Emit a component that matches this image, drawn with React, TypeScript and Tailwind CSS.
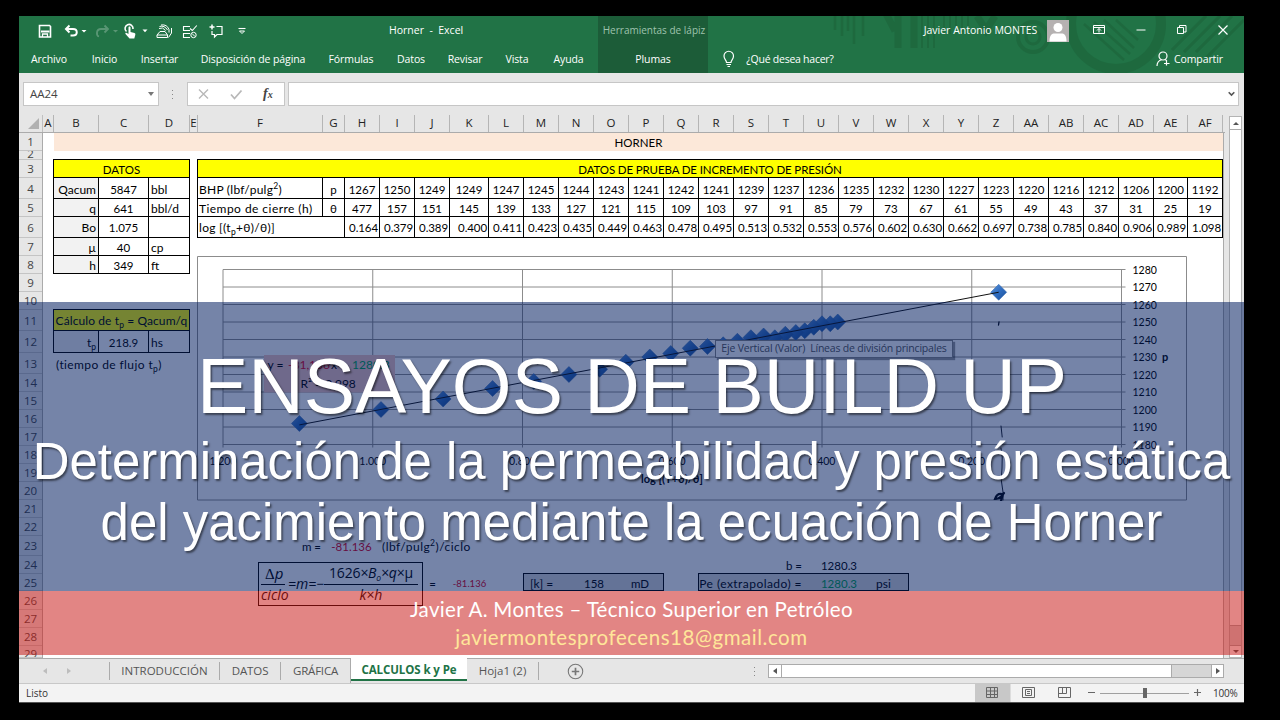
import React from "react";
import clsx from "clsx";

const COLS: [string, number][] = [
  ["A", 11], ["B", 45], ["C", 50], ["D", 41], ["E", 8], ["F", 125], ["G", 22], ["H", 35],
  ["I", 35], ["J", 35], ["K", 39], ["L", 35], ["M", 35], ["N", 35], ["O", 35], ["P", 35],
  ["Q", 35], ["R", 35], ["S", 35], ["T", 35], ["U", 35], ["V", 35], ["W", 35], ["X", 35],
  ["Y", 35], ["Z", 35], ["AA", 35], ["AB", 35], ["AC", 35], ["AD", 35], ["AE", 34], ["AF", 35],
];

const ROWS = [
  18, 9, 18, 21, 18, 21, 18, 18, 18, 18, 21, 22, 21, 18, 18, 18, 18, 18, 18, 18, 18, 18, 20, 18, 17,
  19, 18, 18, 12,
];

const P = [
  1267, 1250, 1249, 1249, 1247, 1245, 1244, 1243, 1241, 1242, 1241, 1239, 1237, 1236, 1235, 1232,
  1230, 1227, 1223, 1220, 1216, 1212, 1206, 1200, 1192,
];
const THETA = [
  477, 157, 151, 145, 139, 133, 127, 121, 115, 109, 103, 97, 91, 85, 79, 73, 67, 61, 55, 49, 43, 37,
  31, 25, 19,
];
const LOG = [
  0.164, 0.379, 0.389, 0.4, 0.411, 0.423, 0.435, 0.449, 0.463, 0.478, 0.495, 0.513, 0.532, 0.553,
  0.576, 0.602, 0.63, 0.662, 0.697, 0.738, 0.785, 0.84, 0.906, 0.989, 1.098,
];

const colIndex = (name: string) => COLS.findIndex((c) => c[0] === name) + 1;

type CellProps = {
  from: string;
  to?: string;
  row: number;
  box?: boolean;
  className?: string;
  children?: React.ReactNode;
};

const Cell = ({ from, to, row, box, className, children }: CellProps) => (
  <div
    className={clsx(
      "flex items-center whitespace-nowrap leading-none",
      box && "-ml-px -mt-px border border-black",
      row === 4 && "pt-0.5",
      className
    )}
    style={{
      gridColumn: `${colIndex(from)} / ${colIndex(to ?? from) + 1}`,
      gridRow: row,
    }}
  >
    <span className="relative top-px">{children}</span>
  </div>
);

const Sub = ({ children }: { children: React.ReactNode }) => (
  <span className="relative top-[3px] text-[8.5px]">{children}</span>
);

const Sup = ({ children }: { children: React.ReactNode }) => (
  <span className="relative -top-[5px] text-[8.5px]">{children}</span>
);

const TitleBar = () => (
  <div className="flex h-[29px] items-center text-[10.5px] font-medium">
    <svg className="shrink-0" width="240" height="29" viewBox="19 16 240 29" fill="none" stroke="#fff" strokeWidth="1.3">
      {/* save */}
      <path d="M39.5 25.5h10l1 1v10.5h-11z" strokeWidth="1.6" />
      <path d="M41 31.5h8.5" strokeWidth="2" />
      <path d="M42.5 37v-3h5v3" />
      {/* undo / redo */}
      <path d="M69.500 25.500L66 29l3.500 3.500M66.500 29h6.500c5 0 5 6.500 0 6.500h-2.500" strokeWidth="2" />
      <path d="M81.500 30h5l-2.500 2.500z" fill="#fff" stroke="none" />
      <g opacity="0.25">
        <path d="M104.500 25.500L108 29l-3.500 3.500M107.500 29h-6.500c-5 0-5 6.500-2 7.500" strokeWidth="1.800" />
        <path d="M113 30h5l-2.500 2.500z" fill="#fff" stroke="none" />
      </g>
      {/* touch mode */}
      <path d="M126.500 31.500a4 4 0 1 1 6.500-2.500" strokeWidth="1.600" />
      <path
        d="M128.500 27.500c0-1.300 2-1.300 2 0v4.500l4 1c1 .5 1 1 .7 2.200l-.9 3.300h-4.800l-4-4.500c-.5-1 .5-1.600 1.300-1l1.700 1z"
        fill="#fff"
        stroke="none"
      />
      <path d="M142.500 29.500h5l-2.500 2.800z" fill="#fff" stroke="none" />
      {/* quick print */}
      <path d="M160 31.500l-3 3.500v2.500h10.500v-2.500l-2.500-3.500zM157 35h10.500" strokeWidth="1" />
      <path d="M159 28.500q4-2 6.500 2M159.500 26.500q5-1.500 8 3.500M161 25q6-1 8 4.500v3" strokeWidth="1" />
      <path d="M168.500 37.500l3-4.500v-5" strokeWidth="1" />
      {/* form check */}
      <path d="M190 26.500h-6.500v4h6.500M190 33.500h-6.500v4h6.500M190 28.500l2.300 2 4.500-5" strokeWidth="1.100" />
      <circle cx="193.500" cy="35" r="2.700" strokeWidth="1" />
      <path d="M192 33.500l3 3" strokeWidth="1" />
      {/* new comment */}
      <path d="M216.500 26.500h5.500v8h-5l-2.500 2.500v-2.500h-2.500v-3.500" strokeWidth="1.200" />
      <path d="M212 24.500v5M209.500 27h5" strokeWidth="1.500" />
      <path d="M238.500 28.500h7" strokeWidth="1.100" />
      <path d="M239.500 31h5l-2.500 2.500z" strokeWidth="1" />
    </svg>
    <span className="ml-[130px] w-[74px] whitespace-pre text-center">Horner  -  Excel</span>
    <span className="ml-[135px] flex h-full w-[110px] shrink-0 items-center justify-center self-stretch whitespace-nowrap bg-[#1c5c38] pl-0.5 text-[10px] font-normal text-[#9fc3ae]">
      Herramientas de lápiz
    </span>
    <span className="ml-[213px] w-[119px] whitespace-nowrap text-center">Javier Antonio MONTES</span>
    <svg className="ml-[7px] shrink-0" width="22" height="22" viewBox="0 0 22 22">
      <path d="M0 0h22v22H0z" fill="#b5b1b1" />
      <circle cx="11" cy="7.500" r="4.500" fill="#fff" />
      <path d="M2.500 21.500c0-6.500 2.500-8 5-8h7c2.500 0 5 1.500 5 8z" fill="#fff" />
    </svg>
    <svg className="-mt-px ml-[23px] shrink-0" width="140" height="20" viewBox="1092 20 140 20" fill="none" stroke="#fff">
      <path d="M1093.500 25.500h11v8h-11zM1093.500 27.500h11M1099 32.500v-4M1097 30.500l2-2 2 2" />
      <path d="M1136.500 30h9" />
      <path d="M1177.500 27.500h6v6h-6zM1179.500 27v-1.500h6.500v6.500h-2" />
      <path d="M1218.500 25.500l9 9M1227.500 25.500l-9 9" strokeWidth="1.200" />
    </svg>
  </div>
);

const RIBBON: [string, string][] = [
  ["Archivo", "w-[60px]"],
  ["Inicio", "w-[51px]"],
  ["Insertar", "w-[59px]"],
  ["Disposición de página", "w-[128px]"],
  ["Fórmulas", "w-[68px]"],
  ["Datos", "w-[52px]"],
  ["Revisar", "w-[56px]"],
  ["Vista", "w-[48px]"],
  ["Ayuda", "w-[55px]"],
];

const Ribbon = () => (
  <div className="flex h-7 items-center text-[10.5px] font-medium tracking-[-0.1px]">
    {RIBBON.map(([label, width]) => (
      <span key={label} className={clsx("whitespace-nowrap pt-0.5 text-center", width)}>
        {label}
      </span>
    ))}
    <span className="ml-0.5 flex h-full w-[110px] items-center justify-center bg-[#1c5c38] pt-0.5">
      Plumas
    </span>
    <svg className="ml-3.5" width="14" height="18" viewBox="0 0 14 18" fill="none" stroke="#fff">
      <path d="M4.500 12.500c0-2.500-2.500-3-2.500-6.500a4.700 4.700 0 0 1 9.500 0c0 3.500-2.500 4-2.500 6.500z" strokeWidth="1.200" />
      <path d="M4.500 14.500h4.500M5.500 16.500h2.500" />
    </svg>
    <span className="ml-2 w-[92px] whitespace-nowrap pt-0.5 text-center tracking-[-0.25px]">
      ¿Qué desea hacer?
    </span>
    <svg className="ml-[320px]" width="15" height="16" viewBox="0 0 15 16" fill="none" stroke="#fff" strokeWidth="1.200">
      <circle cx="7" cy="5" r="4" />
      <path d="M1 15c0-4 2-5.500 4.500-6.300M9 8.500l1.500 1M10.500 9v5.500M8 12.500h5.500" />
    </svg>
    <span className="ml-0.5 w-[51px] whitespace-nowrap pt-0.5 text-center">Compartir</span>
  </div>
);

// faint ornament printed on the green header
const HeaderArt = () => (
  <svg
    className="absolute right-0 top-0"
    width="420"
    height="57"
    viewBox="824 16 420 57"
    fill="none"
    stroke="#1c6139"
    opacity="0.55"
  >
    <path d="M835 16v14M842 16v20M848 16v15M854 16v28M863 16v20" strokeWidth="2.500" />
    <path d="M879 16l16 31M898 16v48M914 16v48" strokeWidth="7" transform="translate(0 -16)" />
    <path d="M916 16v48M922 16v48M928 16v48M934 16v48" strokeWidth="2" transform="translate(0 -16)" />
    <path d="M944 16v14M950 16v18M956 16v12M962 16v16M968 16v10" strokeWidth="2" />
    <path d="M977 16l9 14 9-14" strokeWidth="7" />
    <circle cx="1033" cy="51" r="15" strokeWidth="4" transform="translate(0 -14)" />
    <circle cx="1033" cy="37" r="7" strokeWidth="3" />
    <circle cx="1116" cy="32" r="45" strokeWidth="10" transform="translate(0 -8)" />
    <path d="M1084 24l40 36M1094 22l36 32M1104 20l30 28M1116 20l22 20" strokeWidth="2.500" />
    <path d="M1184 52l36-36M1196 52l36-36M1206 58l38-38M1172 50l34-34" strokeWidth="3" />
  </svg>
);

const FormulaBar = () => (
  <div className="flex h-[42px] items-center bg-[#e6e6e6] pl-1 pr-[5px] text-[#444]">
    <div className="flex h-6 w-[136px] items-center justify-between border border-[#c6c6c6] bg-white px-1.5 text-[11.5px]">
      AA24
      <span className="-mr-0.5 h-0 w-0 border-x-[3.5px] border-t-4 border-x-transparent border-t-[#777]" />
    </div>
    <div className="ml-[13px] flex flex-col gap-[3px]">
      <i className="size-px bg-[#888]" />
      <i className="size-px bg-[#888]" />
      <i className="size-px bg-[#888]" />
    </div>
    <div className="ml-3.5 flex h-6 w-[98px] items-center border border-[#c6c6c6] bg-white">
      <svg className="ml-2.5" width="45" height="12" viewBox="0 0 45 12" fill="none" stroke="#b8b8b8">
        <path d="M1 1.500l9 9M10 1.500l-9 9" strokeWidth="1.400" />
        <path d="M33 6.500l3.500 4 7-8" strokeWidth="1.800" />
      </svg>
      <span className="ml-5 font-['Liberation_Serif',serif] text-[14px] font-bold italic leading-none">
        f<span className="text-[10px]">x</span>
      </span>
    </div>
    <div className="ml-[3px] flex h-6 flex-1 items-center justify-end border border-[#c6c6c6] bg-white pr-[3px]">
      <svg width="7" height="6" viewBox="0 0 7 6" fill="none" stroke="#555" strokeWidth="1.600">
        <path d="M.7 1.200l2.800 2.800 2.800-2.800" />
      </svg>
    </div>
  </div>
);

const ColumnHeaders = () => (
  <div className="flex h-[18px] w-[1206px] border-b border-[#ababab] bg-[#e6e6e6] text-[11.5px] text-[#222]">
    <div className="flex w-6 shrink-0 items-end justify-end border-r border-[#c0c0c0] pb-[3px] pr-[3px]">
      <svg width="11" height="11">
        <path d="M11 0v11H0z" fill="#b1b1b1" />
      </svg>
    </div>
    {COLS.map(([name, width]) => (
      <div
        key={name}
        className="flex shrink-0 items-center justify-center border-r border-[#b5b5b5] pb-px leading-none"
        style={{ width }}
      >
        {name}
      </div>
    ))}
  </div>
);

const RowHeaders = () => (
  <div className="w-6 shrink-0 border-r border-[#ababab] bg-[#e6e6e6] text-[11.5px] text-[#444]">
    {ROWS.map((height, i) => (
      <div
        key={i}
        className={clsx(
          "flex justify-center overflow-hidden border-b border-[#c4c4c4] leading-none",
          i === 1 ? "items-end" : i === 28 ? "items-start pt-0.5" : "items-center pt-px"
        )}
        style={{ height }}
      >
        {i + 1}
      </div>
    ))}
  </div>
);

const chartX = (v: number) => 1121.5 - v * 748.75;
const chartY = (p: number) => 269.5 + (1280 - p) * 1.75;

const Y_TICKS = [1280, 1270, 1260, 1250, 1240, 1230, 1220, 1210, 1200, 1190, 1180];
const X_TICKS = [1.2, 1.0, 0.8, 0.6, 0.4, 0.2, 0];

const Chart = () => (
  <div className="absolute left-[154px] top-[123px]">
    <svg width="990" height="245" viewBox="197 256 990 245" className="block" fontSize="10.5">
      <defs>
        <linearGradient id="marker" x1="0" y1="0" x2="1" y2="1">
          <stop offset="0" stopColor="#5b92d8" />
          <stop offset="0.5" stopColor="#2f6dc0" />
          <stop offset="1" stopColor="#1f519a" />
        </linearGradient>
      </defs>
      <path d="M197.500 256.500h989v243.500h-989z" fill="#fff" stroke="#8c8c8c" />
      <g stroke="#8c8c8c">
        {Y_TICKS.map((t) => (
          <path key={t} d={`M223 ${chartY(t)}H1125.500`} />
        ))}
        {X_TICKS.map((t) => (
          <path key={t} d={`M${chartX(t)} 269.500V447.500`} />
        ))}
      </g>
      {Y_TICKS.map((t) => (
        <text key={t} x="1132.500" y={chartY(t) + 4}>
          {t}
        </text>
      ))}
      {X_TICKS.map((t) => (
        <text key={t} x={chartX(t)} y="464.500" textAnchor="middle">
          {t.toFixed(3)}
        </text>
      ))}
      <text x="1162" y="361" fontSize="11" fontWeight="bold">p</text>
      <text x="672" y="482.500" fontSize="11" textAnchor="middle" fontWeight="bold">log [(T+θ)/θ]</text>
      <path d="M264 355h131v37.500H264z" fill="#f2c4c0" />
      <text y="369" fontSize="12">
        <tspan x="267.500">y =</tspan>
        <tspan x="288" fill="#e00020">-81,136</tspan>
        <tspan x="331">x</tspan>
        <tspan x="341">+</tspan>
        <tspan x="352" fill="#00a050">1280.3</tspan>
      </text>
      <text x="300.500" y="387.500" fontSize="12">R² = 0.998</text>
      {P.map((p, i) => (
        <path
          key={i}
          d="M0 -8L8 0L0 8L-8 0z"
          fill="url(#marker)"
          stroke="#2b62ad"
          strokeWidth="0.500"
          transform={`translate(${chartX(LOG[i])} ${chartY(p)})`}
        />
      ))}
      <path d={`M${chartX(1.098)} ${chartY(1191.2)}L${chartX(0.164)} ${chartY(1267)}`} stroke="#111" />
      {/* pen strokes */}
      <g stroke="#05070f" fill="none" strokeLinecap="round">
        <path d="M999 322l-.5 3" strokeWidth="1.300" />
        <path d="M1001 426l1.200 11M1001 448q2 8 1 20q-2 12 1 24v8" strokeWidth="0.900" />
        <path d="M1002 494q-5-1-7 5q5 0 8-5l-2 7M995 499l5-1 4-5" strokeWidth="2.200" />
      </g>
    </svg>
    <div className="absolute left-[518px] top-[84px] flex h-[18px] w-[238px] items-center justify-center whitespace-pre border border-[#888] bg-white font-['Open_Sans',sans-serif] text-[10.5px] tracking-[-0.2px] text-[#555] shadow-[2px_2px_1px_rgba(0,0,0,0.4)]">
      Eje Vertical (Valor)  Líneas de división principales
    </div>
  </div>
);

const Equation = () => (
  <div className="absolute left-[215px] top-[429px] flex h-[44px] w-[165px] items-center border border-black pl-0.5 font-['Open_Sans',sans-serif] text-[14px] italic leading-none">
    <div className="flex w-[29px] flex-col">
      <span className="h-5 pl-1 pt-0.5 text-[15px] leading-none">
        <span className="font-['Liberation_Serif',serif] not-italic">Δ</span>p
      </span>
      <span className="w-6 border-t border-black" />
      <span className="h-5 pt-[3px] text-[14px] leading-none">ciclo</span>
    </div>
    <span className="-ml-0.5 whitespace-nowrap">=m=−</span>
    <div className="mr-1 flex flex-1 flex-col items-center">
      <span className="h-5 whitespace-nowrap pt-0.5 text-[14px] leading-none tracking-[-0.2px]">
        <span className="not-italic">1626</span>×B<Sub>o</Sub>×q×<span className="not-italic">μ</span>
      </span>
      <span className="w-full border-t border-black" />
      <span className="h-5 pt-[3px] text-[14px] leading-none">k×h</span>
    </div>
  </div>
);

const DATOS: [number, string, string, string][] = [
  [4, "Qacum", "5847", "bbl"],
  [5, "q", "641", "bbl/d"],
  [6, "Bo", "1.075", ""],
  [7, "µ", "40", "cp"],
  [8, "h", "349", "ft"],
];

const Sheet = () => (
  <div
    className="relative grid w-[1181px] overflow-hidden border-r border-[#ababab] bg-white font-['Lato',sans-serif] text-[11.5px] text-black"
    style={{
      gridTemplateColumns: COLS.map((c) => c[1] + "px").join(" "),
      gridTemplateRows: ROWS.map((r) => r + "px").join(" "),
    }}
  >
    <Cell from="B" to="AF" row={1} className="justify-center bg-[#fce8d9] pb-px">HORNER</Cell>

    <Cell from="B" to="D" row={3} box className="justify-center bg-[#ffff00]">DATOS</Cell>
    {DATOS.map(([row, name, value, unit]) => (
      <React.Fragment key={row}>
        <Cell from="B" row={row} box className="justify-end bg-[#f2f2f2] pr-0.5 text-[12px]">{name}</Cell>
        <Cell from="C" row={row} box className="justify-center">{value}</Cell>
        <Cell from="D" row={row} box className="pl-0.5 text-[12px]">{unit}</Cell>
      </React.Fragment>
    ))}

    <Cell from="F" to="AF" row={3} box className="justify-center bg-[#ffff00] tracking-[-0.13px]">
      DATOS DE PRUEBA DE INCREMENTO DE PRESIÓN
    </Cell>
    <Cell from="F" row={4} box className="pl-px text-[12px] tracking-[0.25px]">BHP (lbf/pulg<Sup>2</Sup>)</Cell>
    <Cell from="G" row={4} box className="justify-center">p</Cell>
    <Cell from="F" row={5} box className="pl-px text-[12px] tracking-[0.45px]">Tiempo de cierre (h)</Cell>
    <Cell from="G" row={5} box className="justify-center">θ</Cell>
    <Cell from="F" to="G" row={6} box className="pl-px text-[12px] tracking-[0.3px]">log [(t<Sub>p</Sub>+θ)/θ)]</Cell>
    {COLS.slice(7).map(([name], i) => (
      <React.Fragment key={name}>
        <Cell from={name} row={4} box className="justify-center">{P[i]}</Cell>
        <Cell from={name} row={5} box className="justify-center">{THETA[i]}</Cell>
        <Cell from={name} row={6} box className="justify-end pr-px tracking-[-0.1px]">{LOG[i].toFixed(3)}</Cell>
      </React.Fragment>
    ))}

    <Cell from="B" to="D" row={11} box className="justify-center bg-[#ffff00] text-[12px] tracking-[0.1px]">
      Cálculo de t<Sub>p</Sub> = Qacum/q
    </Cell>
    <Cell from="B" row={12} box className="justify-end bg-[#f2f2f2] pr-0.5 text-[12px]">t<Sub>p</Sub></Cell>
    <Cell from="C" row={12} box className="justify-center">218.9</Cell>
    <Cell from="D" row={12} box className="pl-0.5 text-[12px]">hs</Cell>
    <Cell from="B" to="D" row={13} className="pl-0.5 text-[12px] tracking-[0.4px]">(tiempo de flujo t<Sub>p</Sub>)</Cell>

    <Cell from="F" row={23} className="justify-end pr-0.5">m =</Cell>
    <Cell from="G" to="H" row={23} className="justify-center text-[#e00020]">-81.136</Cell>
    <Cell from="I" to="L" row={23} className="pl-0.5 text-[12px] tracking-[0.45px]">(lbf/pulg<Sup>2</Sup>)/ciclo</Cell>
    <Cell from="R" to="T" row={24} className="justify-end pr-0.5">b =</Cell>
    <Cell from="U" to="V" row={24} className="justify-center">1280.3</Cell>
    <Cell from="J" row={25} className="justify-center">=</Cell>
    <Cell from="K" row={25} className="justify-center text-[9.5px] text-[#e00020]">-81.136</Cell>

    <Cell from="M" to="P" row={25} box className="bg-[#d9d9d9]" />
    <Cell from="M" row={25} className="justify-center text-[12px]">[k] =</Cell>
    <Cell from="N" to="O" row={25} className="justify-center">158</Cell>
    <Cell from="P" row={25} className="pl-0.5">mD</Cell>
    <Cell from="R" to="W" row={25} box className="bg-[#d9d9d9]" />
    <Cell from="R" to="T" row={25} className="justify-end pr-0.5 text-[12px] tracking-[0.45px]">Pe (extrapolado) =</Cell>
    <Cell from="U" to="V" row={25} className="justify-center text-[#00a050]">1280.3</Cell>
    <Cell from="W" row={25} className="pl-0.5 text-[12px]">psi</Cell>

    <Chart />
    <Equation />
  </div>
);

const ScrollBar = () => (
  <div className="ml-1 mt-px flex w-[13px] flex-col border border-[#b4b4b4] bg-[#d6d6d6]">
    <div className="flex h-[13px] items-center justify-center border-b border-[#ababab] bg-white">
      <span className="h-0 w-0 border-x-[3px] border-b-[3px] border-x-transparent border-b-[#555]" />
    </div>
    <div className="h-[496px] border-b border-[#ababab] bg-white" />
    <div className="mt-auto flex h-[12px] items-center justify-center border-t border-[#ababab] bg-white">
      <span className="h-0 w-0 border-x-[3px] border-t-[3px] border-x-transparent border-t-[#555]" />
    </div>
  </div>
);

const SheetTabs = () => (
  <div className="flex h-[25px] bg-[#e6e6e6] text-[11.5px] text-[#555]">
    <div className="flex flex-1 border-t border-[#ababab]">
      <div className="flex w-[91px] items-center gap-5 pl-6">
        <i className="border-y-[3px] border-r-[4px] border-y-transparent border-r-[#bdbdbd]" />
        <i className="border-y-[3px] border-l-[4px] border-y-transparent border-l-[#bdbdbd]" />
      </div>
      <div className="my-[3px] -ml-px flex w-[111px] items-center justify-center border-x border-[#ababab]">INTRODUCCIÓN</div>
      <div className="my-[3px] flex w-[61px] items-center justify-center border-r border-[#ababab] tracking-[-0.1px]">DATOS</div>
      <div className="flex w-[70px] items-center justify-center border-r border-[#ababab] tracking-[-0.2px]">GRÁFICA</div>
      <div className="-mt-px flex h-[23px] w-[116px] items-center justify-center border-b-2 border-[#217346] bg-white pt-0.5 font-bold tracking-[-0.1px] text-[#217346]">
        CALCULOS k y Pe
      </div>
      <div className="my-[3px] flex w-[72px] items-center justify-center border-r border-[#ababab]">Hoja1 (2)</div>
      <svg className="ml-7 mt-1" width="17" height="17" viewBox="0 0 16 16" fill="none" stroke="#777">
        <circle cx="8" cy="8" r="6.800" />
        <path d="M8 4.500v7M4.500 8h7" strokeWidth="1.600" />
      </svg>
      <div className="ml-[170px] flex flex-col justify-center gap-[3px]">
        <i className="size-px bg-[#888]" />
        <i className="size-px bg-[#888]" />
        <i className="size-px bg-[#888]" />
      </div>
      <div className="ml-[13px] mt-[5px] flex h-[14px] w-[456px] border border-[#ababab] bg-[#d6d6d6]">
        <div className="flex w-[13px] items-center justify-center border-r border-[#ababab] bg-white">
          <i className="border-y-[3px] border-r-[4px] border-y-transparent border-r-[#555]" />
        </div>
        <div className="w-[390px] border-r border-[#ababab] bg-white" />
        <div className="ml-auto flex w-[12px] items-center justify-center border-l border-[#ababab] bg-white">
          <i className="border-y-[3px] border-l-[4px] border-y-transparent border-l-[#555]" />
        </div>
      </div>
    </div>
  </div>
);

const StatusBar = () => (
  <div className="flex h-5 items-center border-b border-t border-b-[#555] border-t-[#c8c8c8] bg-[#f3f3f3] pl-[7px] text-[10px] text-[#333]">
    Listo
    <svg className="ml-auto" width="233" height="18" viewBox="975 684 233 18" fill="none" stroke="#666">
      <path d="M975 684h35.500v18H975z" fill="#c8c8c8" stroke="none" />
      <path d="M986.500 687.500h11v10h-11zM990.500 687v11M994.500 687v11M986 691h12M986 694.500h12" />
      <path d="M1022.500 687.500h12v10h-12zM1025.500 689.500h6v6h-6zM1027 691.500h3M1027 693.500h3" />
      <path d="M1058.500 687.500h12v10h-12zM1058.500 693.500h8v-6M1062.500 687.500v6" />
      <path d="M1088 692.500h7M1194 692.500h7M1197.500 689v7" strokeWidth="1.200" />
      <path d="M1100 693.500h89" stroke="#a0a0a0" />
      <path d="M1143 688h4v10h-4z" fill="#666" stroke="none" />
    </svg>
    <span className="w-9 pl-[5px] tracking-[-0.2px]">100%</span>
  </div>
);

const Banner = () => (
  <div className="absolute inset-x-0 top-[302px] text-white">
    <div className="ml-[19px] mr-9 h-[289px] bg-[rgba(0,27,95,0.54)]" />
    <div className="ml-[19px] mr-9 h-[64px] bg-[rgba(200,25,22,0.53)]" />
    <div className="absolute inset-x-0 top-[39px] text-center font-['Liberation_Sans',Arial,sans-serif] [text-shadow:1.5px_2px_2px_rgba(0,0,0,0.5)]">
      <h1 className="whitespace-nowrap pr-4 text-[76.9px] leading-[90px]">ENSAYOS DE BUILD UP</h1>
      <p className="-mx-10 whitespace-nowrap pr-[17px] text-[50.95px] leading-[61px]">
        Determinación de la permeabilidad y presión estática
        <br />
        del yacimiento mediante la ecuación de Horner
      </p>
    </div>
    <div className="absolute inset-x-0 top-[293px] whitespace-nowrap pr-[17px] text-center font-['Lato',sans-serif] text-[20.5px] leading-[28px]">
      <p className="tracking-[0.32px]">Javier A. Montes – Técnico Superior en Petróleo</p>
      <p className="tracking-[0.52px] text-[#ffe699]">javiermontesprofecens18@gmail.com</p>
    </div>
  </div>
);

export default function App() {
  return (
    <div className="relative h-[720px] w-[1280px] overflow-hidden bg-black pt-4 font-['Open_Sans',sans-serif]">
      <div className="ml-[19px] w-[1225px] bg-[#e6e6e6]">
        <header className="relative bg-[#217346] text-white">
          <HeaderArt />
          <div className="relative">
            <TitleBar />
            <Ribbon />
          </div>
        </header>
        <FormulaBar />
        <div className="flex">
          <div>
            <ColumnHeaders />
            <div className="flex h-[525px] overflow-hidden">
              <RowHeaders />
              <Sheet />
            </div>
          </div>
          <ScrollBar />
        </div>
        <SheetTabs />
        <StatusBar />
      </div>
      <Banner />
    </div>
  );
}
